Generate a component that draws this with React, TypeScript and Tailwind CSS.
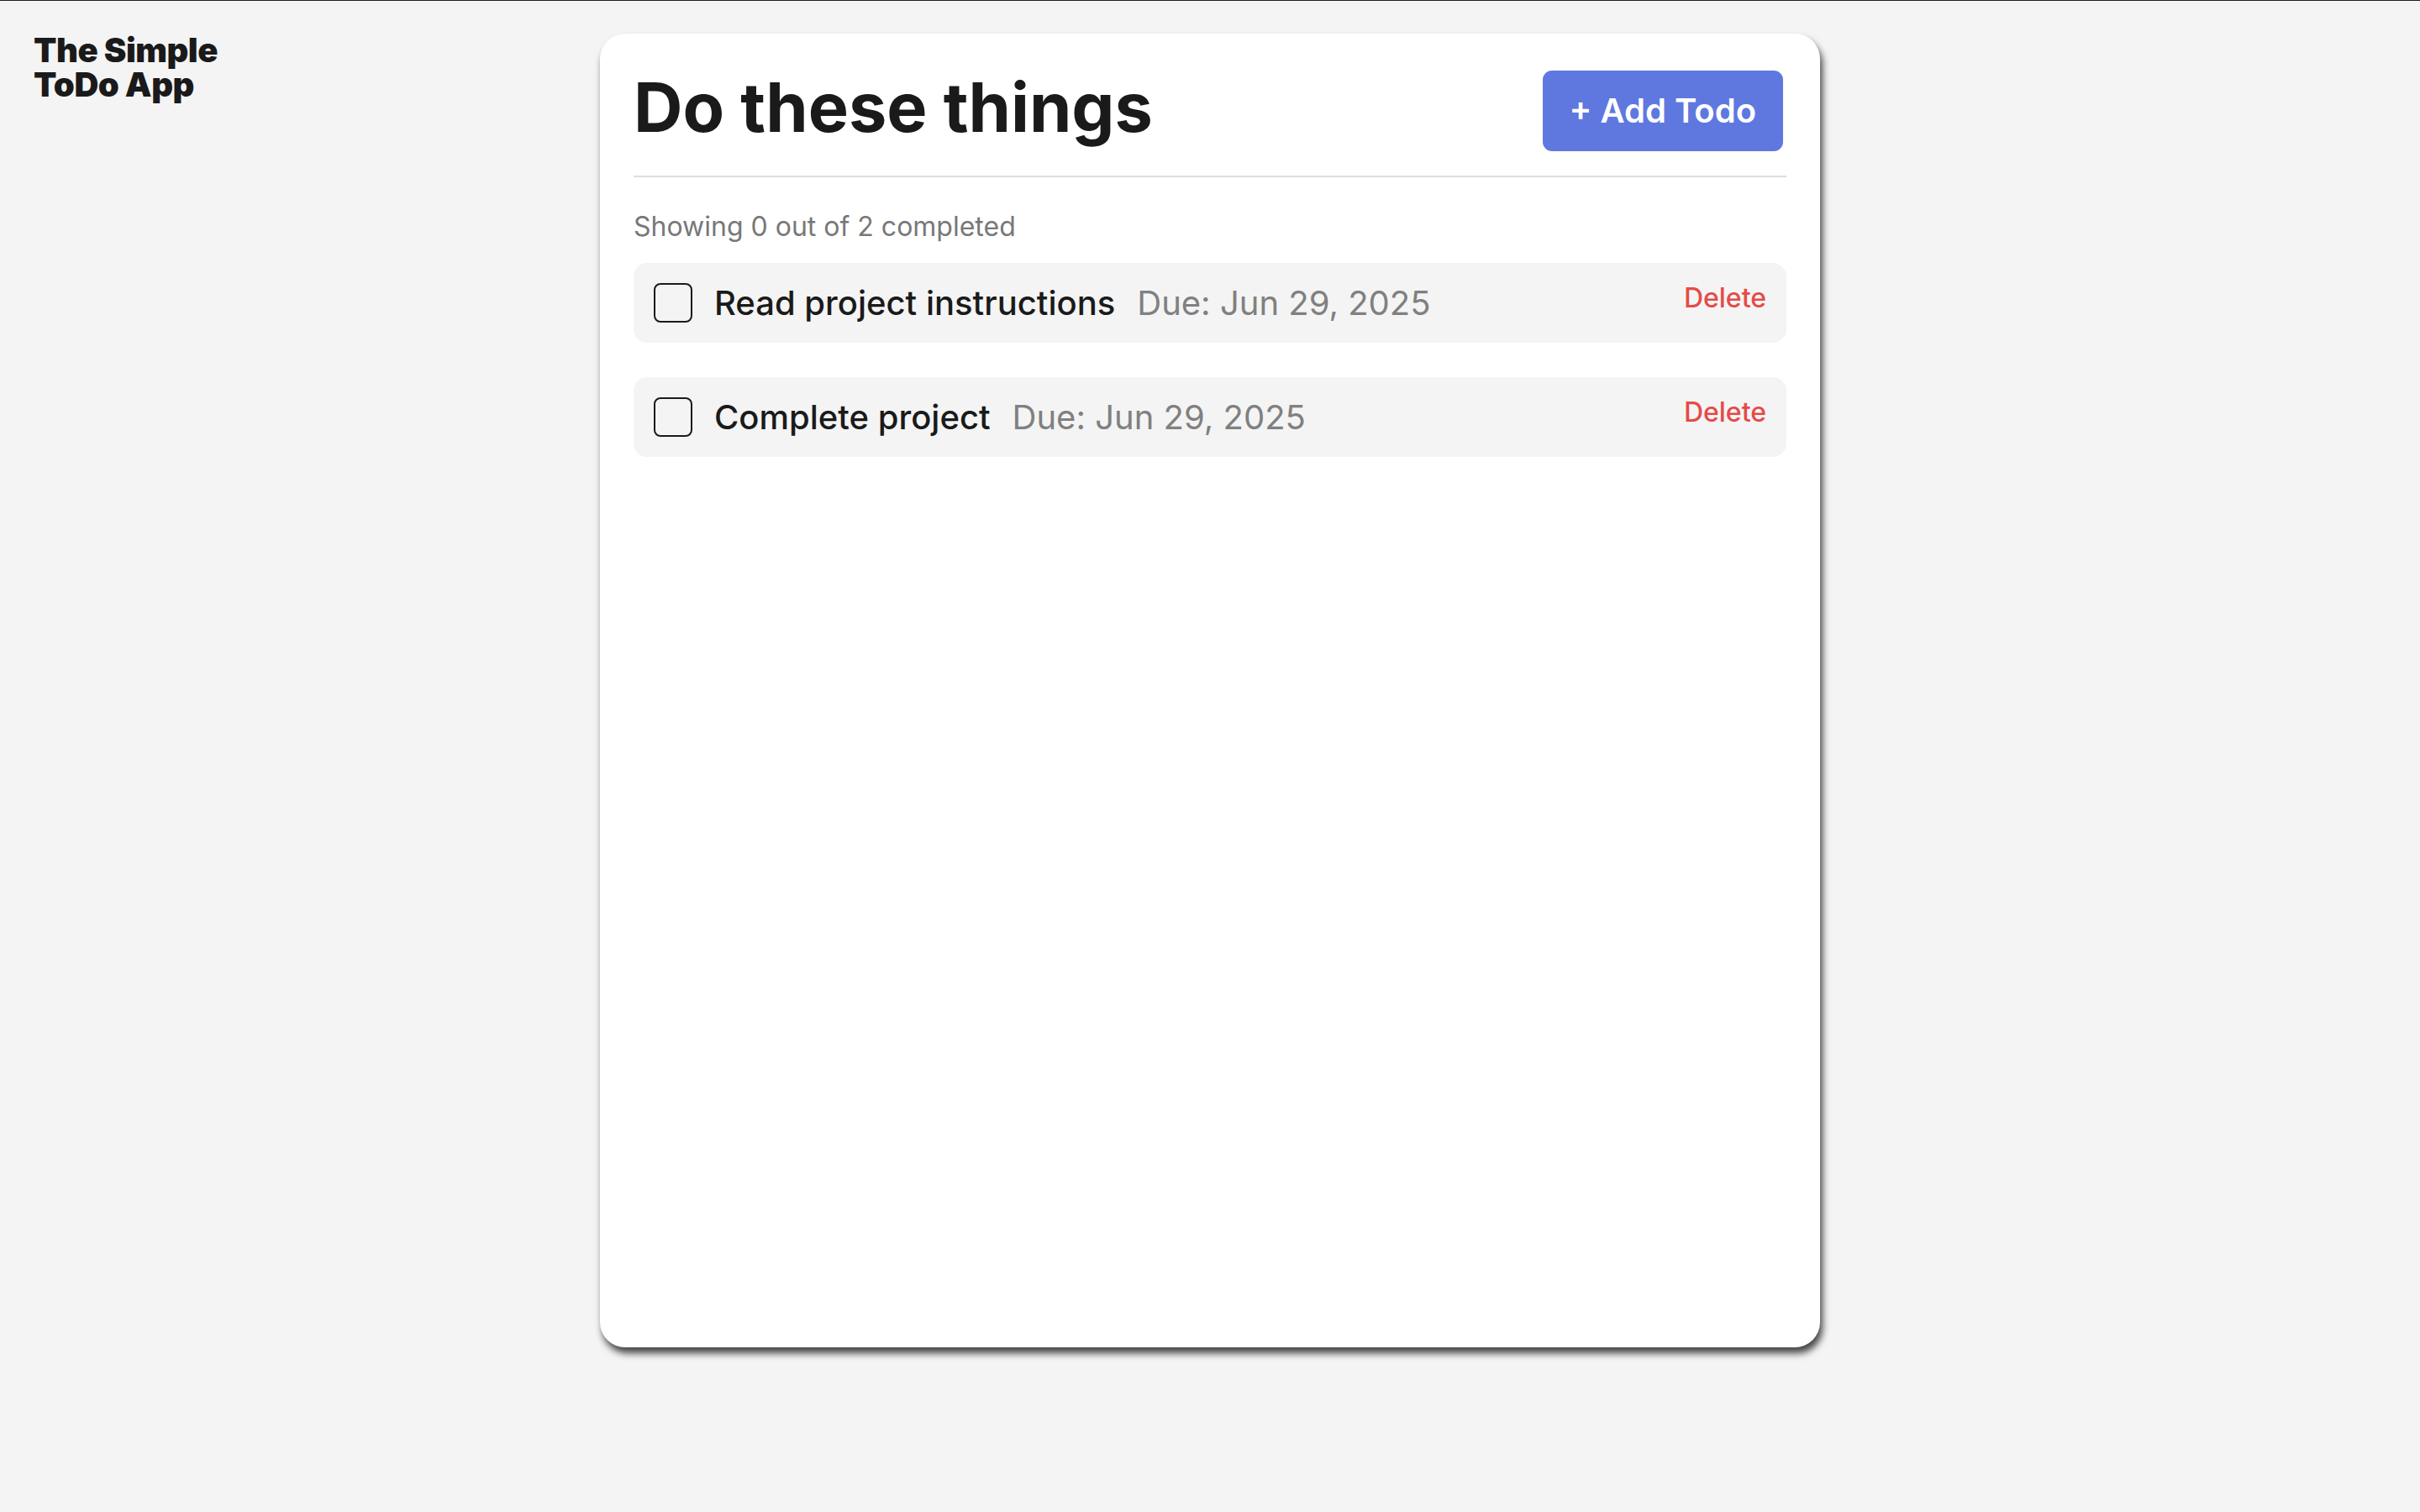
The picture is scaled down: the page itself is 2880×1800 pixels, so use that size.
import React from "react";

const todos = [
  { title: "Read project instructions", due: "Jun 29, 2025" },
  { title: "Complete project", due: "Jun 29, 2025" },
];

export default function App() {
  return (
    <div
      className="min-h-screen w-full bg-[#f4f4f4] border-t border-[#1e1e1e]"
      style={{ fontFamily: "Inter, 'Noto Sans', sans-serif" }}
    >
      <div className="grid grid-cols-[1fr_1452px_1fr]">
        <div className="pl-[40px] pt-[38px]">
          <div className="text-[40px] leading-[41px] font-black tracking-[-0.012em] text-[#1a1a1a]">
            The Simple
            <br />
            ToDo App
          </div>
        </div>

        <div className="mt-[39px] h-[1564px] rounded-[30px] bg-white px-[40px] pt-[40px] shadow-[3px_7px_9px_rgba(0,0,0,0.72)]">
          <div className="flex items-start justify-between border-b-2 border-[#dedede] pb-[29px]">
            <h1 className="text-[81px] leading-[97px] font-bold text-[#1a1a1a]">
              Do these things
            </h1>
            <button className="mt-[4px] mr-[4px] rounded-[11px] bg-[#5f78e0] px-[32px] py-[20px] text-[40px] leading-[56px] font-semibold text-white">
              + Add Todo
            </button>
          </div>

          <p className="mt-[35px] text-[32px] leading-[48px] text-[#787878]">
            Showing 0 out of 2 completed
          </p>

          <div className="mt-[19px] flex flex-col gap-[41px]">
            {todos.map((t) => (
              <div
                key={t.title}
                className="flex h-[95px] items-center justify-between rounded-[16px] bg-[#f4f4f4] px-[24px]"
              >
                <div className="flex items-center">
                  <div className="h-[47px] w-[46px] rounded-[8px] border-2 border-[#1a1a1a]" />
                  <span className="ml-[26px] text-[40px] leading-[56px] font-medium text-[#1a1a1a]">
                    {t.title}
                  </span>
                  <span className="ml-[26px] text-[40px] leading-[56px] text-[#808080]">
                    Due: {t.due}
                  </span>
                </div>
                <div className="pb-[11px]">
                  <span className="text-[32px] leading-[48px] font-medium text-[#e54b47]">
                    Delete
                  </span>
                </div>
              </div>
            ))}
          </div>
        </div>

        <div />
      </div>
    </div>
  );
}
